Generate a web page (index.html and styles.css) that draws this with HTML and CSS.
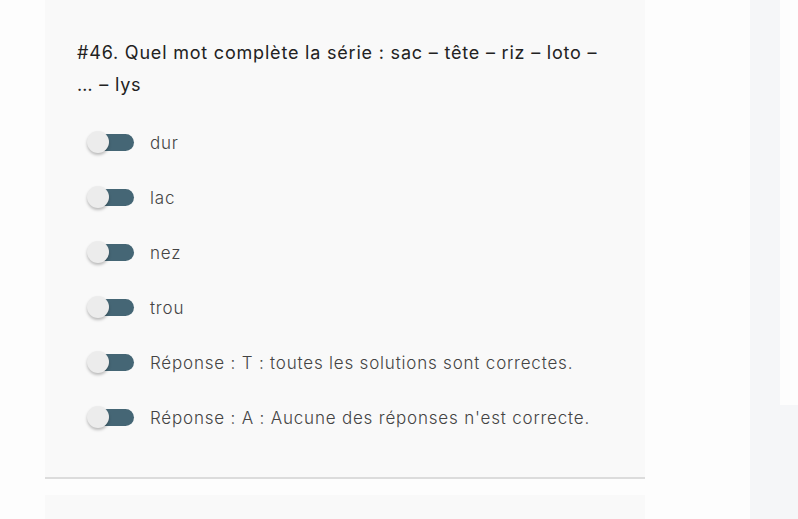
FILE: index.html
```html
<!DOCTYPE html>
<html lang="fr">

<head>
    <meta charset="UTF-8">
    <meta name="viewport" content="width=device-width, initial-scale=1.0">
    <title>Question 46</title>
    <link rel="stylesheet" href="styles.css">
</head>

<body>
    <div class="page">
        <main class="main">
            <div class="question">
                <p class="question__title">#46. Quel mot complète la série : sac – tête – riz – loto – … – lys</p>
                <div class="options">
                    <label class="option"><span class="switch"></span><span class="option__text">dur</span></label>
                    <label class="option"><span class="switch"></span><span class="option__text">lac</span></label>
                    <label class="option"><span class="switch"></span><span class="option__text">nez</span></label>
                    <label class="option"><span class="switch"></span><span class="option__text">trou</span></label>
                    <label class="option"><span class="switch"></span><span class="option__text">Réponse : T : toutes les solutions sont correctes.</span></label>
                    <label class="option"><span class="switch"></span><span class="option__text">Réponse : A : Aucune des réponses n'est correcte.</span></label>
                </div>
            </div>
            <div class="question question--next"></div>
        </main>
        <aside class="sidebar">
            <div class="sidebar__top"></div>
            <div class="sidebar__bottom"></div>
        </aside>
    </div>
</body>

</html>
```

FILE: styles.css
```css
html,
body {
    margin: 0;
    height: 100%;
    background: #fdfdfd;
    overflow: hidden;
}

.page {
    display: flex;
    height: 519px;
    padding-left: 45px;
    font-family: Inter, "Noto Sans", sans-serif;
}

.main {
    width: 600px;
    display: flex;
    flex-direction: column;
}

.question {
    flex-shrink: 0;
    background: #f9f9f9;
    border-bottom: 2px solid #dcdcdc;
    padding: 37px 40px 32px 32px;
    box-sizing: border-box;
    height: 479px;
}

.question--next {
    margin-top: 16px;
    border-bottom: none;
    height: 40px;
    padding: 0;
}

.question__title {
    margin: 0 0 14px 0;
    font-size: 18px;
    line-height: 32px;
    color: #222;
    font-weight: 400;
    letter-spacing: 0.8px;
}

.options {
    display: flex;
    flex-direction: column;
}

.option {
    display: flex;
    align-items: center;
    height: 55px;
    padding-left: 11px;
}

.option__text {
    font-size: 17px;
    color: #444;
    font-weight: 300;
    letter-spacing: 0.8px;
}

.switch {
    position: relative;
    width: 46px;
    height: 17px;
    border-radius: 9px;
    background: #456675;
    margin-right: 16px;
    flex-shrink: 0;
}

.switch::before {
    content: "";
    position: absolute;
    left: -1px;
    top: -3px;
    width: 22px;
    height: 22px;
    border-radius: 50%;
    background: #ececec;
    box-shadow: 0 2px 3px rgba(0, 0, 0, 0.25);
}

.sidebar {
    margin-left: 105px;
    display: flex;
    flex-direction: column;
    width: 48px;
}

.sidebar__top {
    width: 30px;
    height: 405px;
    background: #f5f6f8;
}

.sidebar__bottom {
    flex: 1;
    background: #f5f6f8;
}
```
